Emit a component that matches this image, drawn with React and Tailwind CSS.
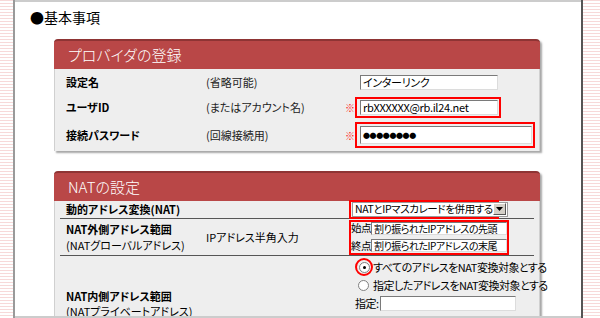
import React from 'react';

const stripe =
  'bg-[repeating-linear-gradient(to_bottom,#f7d9d9_0px,#f7d9d9_1px,#ffffff_1px,#ffffff_3px)]';

function Panel({ title, children }) {
  return (
    <div className="ml-[39px] w-[486px] rounded-t-[4px] shadow-[2px_2px_2px_rgba(0,0,0,0.35)]">
      <div className="h-[30px] rounded-t-[4px] border-t-2 border-[#8e3434] bg-[#b94747] pl-[14px] flex items-center text-[15px] font-light text-white">
        {title}
      </div>
      <div className="bg-[#eeeeee] border-l border-r border-[#d0d0d0]">{children}</div>
    </div>
  );
}

function TextBox({ value, w, h, size }) {
  return (
    <div
      className={`${w} ${h} shrink-0 bg-white border border-t-[#7a7a7a] border-l-[#7a7a7a] border-b-[#dcdcdc] border-r-[#dcdcdc] flex items-center pl-[2px] ${
        size || 'text-[11px] tracking-[-0.3px]'
      } text-black overflow-hidden whitespace-nowrap`}
    >
      {value}
    </div>
  );
}

function Radio({ checked }) {
  return (
    <span className="w-[11px] h-[11px] rounded-full border border-[#808080] bg-white flex items-center justify-center shrink-0">
      {checked && <span className="w-[3px] h-[3px] rounded-full bg-black" />}
    </span>
  );
}

export default function App() {
  return (
    <div className="w-[600px] h-[318px] overflow-hidden flex bg-white font-['Noto_Sans_CJK_JP',sans-serif] [font-feature-settings:'palt'] text-black">
      <div className={`w-[13px] shrink-0 ${stripe}`} />
      <div className="w-[2px] shrink-0 bg-[#9a9a9a]" />

      <main className="w-[566px] shrink-0 border-t-2 border-b-2 border-[#cccccc] overflow-hidden">
        <h2 className="pl-[15px] pt-[5px] h-[37px] text-[14px] leading-[20px]">●基本事項</h2>

        {/* プロバイダの登録 */}
        <Panel title="プロバイダの登録">
          <div className="pl-[11px] pt-[6px] pb-[3px] text-[11px]">
            <div className="flex items-center h-[15px]">
              <span className="w-[140px] shrink-0 font-bold">設定名</span>
              <span className="w-[154px] shrink-0 text-[#222]">(省略可能)</span>
              <TextBox value="インターリンク" w="w-[138px]" h="h-[15px]" />
            </div>
            <div className="flex items-center h-[21px] mt-[7px]">
              <span className="w-[140px] shrink-0 font-bold">ユーザID</span>
              <span className="w-[139px] shrink-0 text-[#222]">(またはアカウント名)</span>
              <span className="w-[10px] shrink-0 text-[#ff2020] text-[10px]">※</span>
              <div className="h-[21px] shrink-0 border-2 border-[#ff0000] pl-[3px] pr-[1px] flex items-center">
                <TextBox value="rbXXXXXX@rb.il24.net" w="w-[138px]" h="h-[15px]" />
              </div>
            </div>
            <div className="flex items-center h-[26px] mt-[4px]">
              <span className="w-[140px] shrink-0 font-bold">接続パスワード</span>
              <span className="w-[139px] shrink-0 text-[#222]">(回線接続用)</span>
              <span className="w-[10px] shrink-0 text-[#ff2020] text-[10px]">※</span>
              <div className="h-[26px] shrink-0 border-2 border-[#ff0000] pl-[3px] pr-[1px] flex items-center">
                <TextBox value="●●●●●●●●" w="w-[172px]" h="h-[18px]" size="text-[7px] tracking-[-0.4px]" />
              </div>
            </div>
          </div>
        </Panel>

        <div className="h-[20px]" />

        {/* NATの設定 */}
        <Panel title="NATの設定">
          <div className="px-[5px] text-[11px]">
            <div className="flex items-center h-[18px] border-b border-[#555555]">
              <span className="w-[289px] shrink-0 pl-[6px] font-bold">動的アドレス変換(NAT)</span>
              <div className="h-[19px] -mt-[1px] w-[150px] shrink-0 border-2 border-[#ff0000] flex items-center px-[1px]">
                <div className="flex-1 h-[15px] bg-white border border-[#9a9a9a] flex items-center pl-[2px] pr-[1px] justify-between">
                  <span className="text-[10.5px] tracking-[-0.4px] whitespace-nowrap">NATとIPマスカレードを併用する</span>
                  <span className="w-[13px] h-[12px] shrink-0 bg-[#d4d0c8] border border-t-white border-l-white border-b-[#555] border-r-[#555] flex items-center justify-center">
                    <svg width="7" height="4" viewBox="0 0 7 4">
                      <path d="M0 0h7L3.5 4z" fill="#000" />
                    </svg>
                  </span>
                </div>
              </div>
            </div>

            <div className="flex items-center h-[37px] border-b border-[#555555]">
              <div className="w-[146px] shrink-0 pl-[6px] leading-[16px] whitespace-nowrap">
                <div className="font-bold">NAT外側アドレス範囲</div>
                <div>(NATグローバルアドレス)</div>
              </div>
              <span className="w-[143px] shrink-0">IPアドレス半角入力</span>
              <div className="w-[160px] h-[35px] shrink-0 border-2 border-[#ff0000] flex flex-col justify-center gap-[2px]">
                <div className="flex items-center">
                  <span className="w-[20px] shrink-0 text-[10.5px] tracking-[-0.5px] whitespace-nowrap">始点</span>
                  <TextBox value="割り振られたIPアドレスの先頭" w="w-[136px]" h="h-[13px]" size="text-[10px] tracking-[-0.5px]" />
                </div>
                <div className="flex items-center">
                  <span className="w-[20px] shrink-0 text-[10.5px] tracking-[-0.5px] whitespace-nowrap">終点</span>
                  <TextBox value="割り振られたIPアドレスの末尾" w="w-[136px]" h="h-[13px]" size="text-[10px] tracking-[-0.5px]" />
                </div>
              </div>
            </div>

            <div className="flex">
              <div className="w-[295px] shrink-0 pl-[6px] pt-[33px] leading-[15px] whitespace-nowrap">
                <div className="font-bold">NAT内側アドレス範囲</div>
                <div>(NATプライベートアドレス)</div>
              </div>
              <div className="pt-[2px] text-[11px] tracking-[-0.5px]">
                <div className="flex items-center h-[18px]">
                  <span className="w-[18px] h-[18px] shrink-0 rounded-full border-2 border-[#ff0000] flex items-center justify-center">
                    <Radio checked />
                  </span>
                  <span className="whitespace-nowrap">すべてのアドレスをNAT変換対象とする</span>
                </div>
                <div className="flex items-center h-[18px] pl-[3px] gap-[4px]">
                  <Radio />
                  <span className="whitespace-nowrap">指定したアドレスをNAT変換対象とする</span>
                </div>
                <div className="flex items-center h-[16px] mt-[1px]">
                  <span className="w-[25px] shrink-0 whitespace-nowrap">指定:</span>
                  <TextBox value="" w="w-[136px]" h="h-[15px]" />
                </div>
                <div className="flex items-center h-[16px] pl-[3px] gap-[4px] mt-[2px]">
                  <Radio />
                  <span className="whitespace-nowrap">以下のチェックされた範囲を適用する</span>
                </div>
              </div>
            </div>
          </div>
        </Panel>
      </main>

      <div className="w-[2px] shrink-0 bg-[#555555]" />
      <div className={`flex-1 ${stripe}`} />
    </div>
  );
}
